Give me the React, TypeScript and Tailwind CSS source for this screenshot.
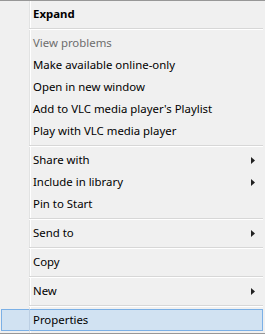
import React from "react";

type Item =
  | { kind: "item"; label: string; bold?: boolean; disabled?: boolean; sub?: boolean; hot?: boolean }
  | { kind: "sep" };

const items: Item[] = [
  { kind: "item", label: "Expand", bold: true },
  { kind: "sep" },
  { kind: "item", label: "View problems", disabled: true },
  { kind: "item", label: "Make available online-only" },
  { kind: "item", label: "Open in new window" },
  { kind: "item", label: "Add to VLC media player's Playlist" },
  { kind: "item", label: "Play with VLC media player" },
  { kind: "sep" },
  { kind: "item", label: "Share with", sub: true },
  { kind: "item", label: "Include in library", sub: true },
  { kind: "item", label: "Pin to Start" },
  { kind: "sep" },
  { kind: "item", label: "Send to", sub: true },
  { kind: "sep" },
  { kind: "item", label: "Copy" },
  { kind: "sep" },
  { kind: "item", label: "New", sub: true },
  { kind: "sep" },
  { kind: "item", label: "Properties", hot: true },
];

function Arrow() {
  return (
    <svg width="4" height="7" viewBox="0 0 4 7" className="block">
      <path d="M0 0 L4 3.5 L0 7 Z" fill="#222" />
    </svg>
  );
}

export default function App() {
  return (
    <div
      className="w-[265px] h-[334px] overflow-hidden bg-[#f0f0f0] border-t border-b border-[#979797] px-[1px] pt-[2px] text-[11.4px] text-black bg-[linear-gradient(to_right,#f0f0f0_29px,#e2e3e3_29px,#e2e3e3_30px,#ffffff_30px,#ffffff_31px,#f0f0f0_31px)]"
      style={{ fontFamily: '"Noto Sans", "Segoe UI", sans-serif' }}
    >
      {items.map((it, i) =>
        it.kind === "sep" ? (
          <div key={i} className="h-[7px] flex flex-col pl-[28px] pr-[1px]">
            <div className="h-[3px]" />
            <div className="h-[1px] bg-[#d7d7d7]" />
            <div className="h-[1px] bg-white" />
          </div>
        ) : (
          <div
            key={i}
            className={
              "h-[22px] flex items-center mr-[1px] " +
              (it.hot ? "bg-[#d1e2f2] shadow-[inset_0_0_0_1px_#7bb0e6]" : "")
            }
          >
            <div className={"w-[29px] h-full " + (it.hot ? "border-r border-[#bccfe3]" : "")} />
            <div
              className={
                "flex-1 pl-[3px] leading-none whitespace-nowrap " +
                (it.bold ? "font-bold " : "") +
                (it.disabled ? "text-[#6d6d6d]" : "")
              }
            >
              {it.label}
            </div>
            {it.sub && (
              <div className="w-[12px] flex justify-start">
                <Arrow />
              </div>
            )}
          </div>
        )
      )}
    </div>
  );
}
